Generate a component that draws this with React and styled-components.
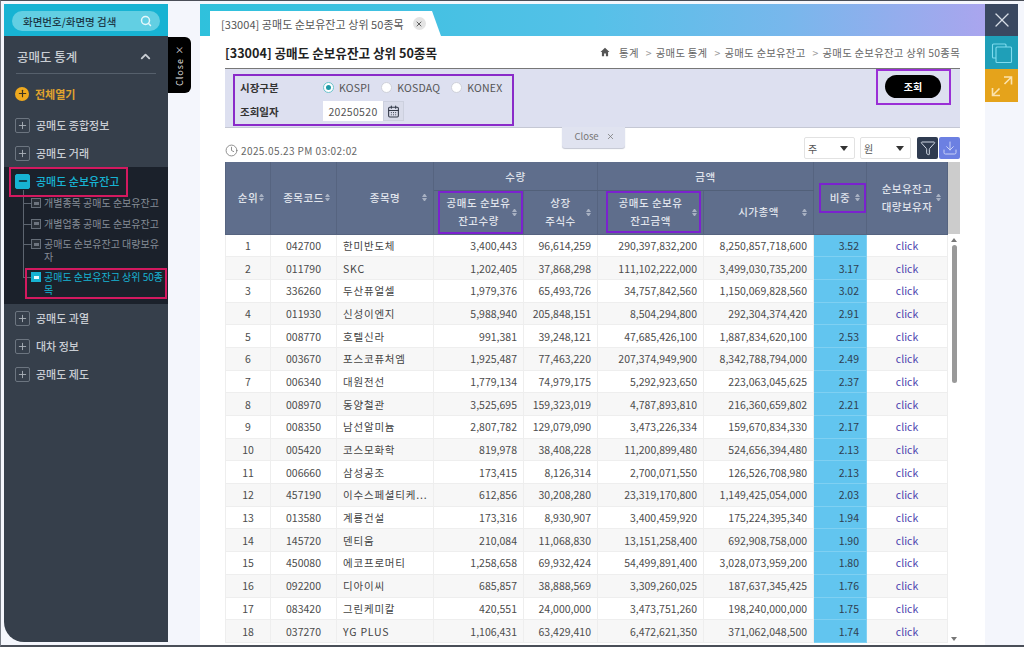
import React from "react";
import styled, { createGlobalStyle } from "styled-components";
import { Search, ChevronUp, Plus, Minus, X, Clock, CalendarDays, Funnel, Download } from "lucide-react";

const GlobalStyle = createGlobalStyle`
  html, body {
    margin: 0;
    height: 100%;
    overflow: hidden;
    background: #f4f6fc;
  }
  * { box-sizing: border-box; }
  body, table, button {
    font-family: "Noto Sans CJK KR", "Noto Sans", sans-serif;
  }
`;

const Frame = styled.div`
  width: 1024px;
  height: 647px;
  display: flex;
  padding: 3px 6px 0 3px;
  border-top: 1px solid #4a4f58;
  border-left: 1px solid #777c85;
  border-bottom: 2px solid #4a4f58;
  background: #f4f6fc;
`;

const Sidebar = styled.aside`
  position: relative;
  width: 164px;
  margin: 0 32px 3px 0;
  background: #363f4b;
  border-bottom-left-radius: 20px;
  flex-shrink: 0;
`;

const SearchBand = styled.div`
  height: 32px;
  background: #17b3d3;
  padding: 7px 8px 0 8px;
`;

const SearchPill = styled.div`
  height: 20px;
  border-radius: 10px;
  background: #62cfe3;
  display: flex;
  align-items: center;
  justify-content: space-between;
  padding: 0 8px 0 11px;
  font-size: 10.5px;
  font-weight: 500;
  color: #1d3a48;
  svg { color: #e6f8fb; }
`;

const SectionHead = styled.div`
  height: 38px;
  margin: 0 12px;
  padding: 3px 3px 0 1px;
  display: flex;
  align-items: center;
  justify-content: space-between;
  border-bottom: 1px solid #56606c;
  font-size: 12.5px;
  font-weight: 500;
  color: #c9cdd3;
`;

const OpenAll = styled.div`
  height: 37px;
  padding: 2px 0 0 11px;
  display: flex;
  align-items: center;
  gap: 6px;
  font-size: 11px;
  font-weight: 700;
  color: #e0a32e;
`;

const OpenDot = styled.span`
  width: 14px;
  height: 14px;
  border-radius: 50%;
  background: #efa91e;
  color: #3a3320;
  display: flex;
  align-items: center;
  justify-content: center;
`;

const MenuRow = styled.div`
  position: relative;
  height: 28px;
  padding-left: 11px;
  display: flex;
  align-items: center;
  gap: 6px;
  font-size: 11px;
  font-weight: 500;
  color: ${(p) => (p.$active ? "#17b3d3" : "#c9cdd3")};
`;

const PlusBox = styled.span`
  width: 15px;
  height: 15px;
  border-radius: 2px;
  display: flex;
  align-items: center;
  justify-content: center;
  border: 1px solid ${(p) => (p.$active ? "#17b3d3" : "#6c7580")};
  background: ${(p) => (p.$active ? "#17b3d3" : "transparent")};
  color: ${(p) => (p.$active ? "#10222c" : "#aab0b8")};
`;

const ActiveGroup = styled.div`
  height: 137px;
  background: #1b212b;
`;

const SubList = styled.div`
  position: relative;
  margin: -2px 0 0 0;
  &::before {
    content: "";
    position: absolute;
    left: 19px;
    top: -3px;
    height: 88px;
    width: 1px;
    background: #5d6570;
  }
`;

const SubRow = styled.div`
  position: relative;
  display: flex;
  gap: 3px;
  padding: 4px 0 4px 27px;
  font-size: 10px;
  line-height: 12.5px;
  color: ${(p) => (p.$active ? "#17b3d3" : "#868d97")};
  &::before {
    content: "";
    position: absolute;
    left: 19px;
    top: 10px;
    width: 8px;
    height: 1px;
    background: #5d6570;
  }
`;

const SubIcon = styled.span`
  flex-shrink: 0;
  width: 10px;
  height: 10px;
  margin-top: 1px;
  border: 1px solid ${(p) => (p.$active ? "#17b3d3" : "#666e78")};
  background: ${(p) => (p.$active ? "#17b3d3" : "#2a3038")};
  display: flex;
  align-items: center;
  justify-content: center;
  &::after {
    content: "";
    width: 5px;
    height: 3px;
    background: ${(p) => (p.$active ? "#e8fafd" : "#6d747e")};
  }
`;

const PinkBox = styled.div`
  position: absolute;
  left: ${(p) => p.$left}px;
  top: ${(p) => p.$top}px;
  width: ${(p) => p.$w}px;
  height: ${(p) => p.$h}px;
  border: 2px solid #d3195f;
  pointer-events: none;
`;

const CloseTab = styled.div`
  position: absolute;
  left: 164px;
  top: 33px;
  width: 23px;
  height: 56px;
  background: #000;
  border-radius: 0 6px 6px 0;
  color: #ddd;
  font-size: 9px;
  letter-spacing: 1px;
  display: flex;
  align-items: center;
  justify-content: center;
  span {
    writing-mode: vertical-rl;
    transform: rotate(180deg);
  }
`;

const Main = styled.main`
  width: 785px;
  flex-shrink: 0;
  background: #fff;
  display: flex;
  flex-direction: column;
  min-height: 0;
`;

const TabBand = styled.div`
  height: 32px;
  flex-shrink: 0;
  padding: 7px 0 0 10px;
  background: linear-gradient(90deg, #2fc1dc 0%, #55c1e8 50%, #78b7ec 75%, #aaa5ee 100%);
`;

const Tab = styled.div`
  width: 231px;
  height: 25px;
  background: #fff;
  clip-path: polygon(0 0, 222px 0, 100% 100%, 0 100%);
  padding: 0 0 0 11px;
  display: flex;
  align-items: center;
  gap: 9px;
  font-size: 11px;
  letter-spacing: 0.05px;
  color: #555;
`;

const TabClose = styled.span`
  width: 13px;
  height: 13px;
  border-radius: 50%;
  background: #e4e4e4;
  color: #444;
  display: flex;
  align-items: center;
  justify-content: center;
`;

const Content = styled.div`
  flex: 1;
  min-height: 0;
  padding: 0 25px;
  display: flex;
  flex-direction: column;
`;

const TitleRow = styled.div`
  height: 32px;
  flex-shrink: 0;
  display: flex;
  align-items: center;
  justify-content: space-between;
`;

const Title = styled.h1`
  margin: 0;
  font-size: 12.6px;
  font-weight: 700;
  color: #222;
`;

const Crumbs = styled.div`
  display: flex;
  align-items: center;
  font-size: 10.4px;
  letter-spacing: 0.25px;
  color: #666;
  svg { margin-right: 9px; }
  span + span::before {
    content: ">";
    margin: 0 4px 0 7px;
    color: #999;
  }
`;

const SearchPanel = styled.div`
  position: relative;
  height: 60px;
  flex-shrink: 0;
  display: flex;
  justify-content: space-between;
  padding: 5px 9px 0 8px;
  background: #dde0f0;
  border-top: 1px solid #777;
  border-bottom: 1px solid #c5c8d4;
`;

const Highlight = styled.div`
  width: 281px;
  height: 52px;
  border: 2px solid #8a2bc9;
  padding: 0 0 0 5px;
  display: flex;
  flex-direction: column;
  gap: 2px;
`;

const FilterRow = styled.div`
  display: flex;
  align-items: center;
  height: 22px;
  font-size: 10.5px;
  color: #555;
`;

const FilterLabel = styled.div`
  width: 83px;
  flex-shrink: 0;
  font-weight: 700;
  color: #333;
`;

const RadioItem = styled.label`
  display: flex;
  align-items: center;
  flex-shrink: 0;
  gap: 5px;
  margin-right: 11px;
  letter-spacing: 0.2px;
`;

const RadioDot = styled.span`
  width: 11px;
  height: 11px;
  border-radius: 50%;
  background: #fff;
  border: 1px solid ${(p) => (p.$on ? "#6bc4cc" : "#cfd1da")};
  display: flex;
  align-items: center;
  justify-content: center;
  &::after {
    content: "";
    width: 5px;
    height: 5px;
    border-radius: 50%;
    background: ${(p) => (p.$on ? "#1f9aa6" : "transparent")};
  }
`;

const DateInput = styled.div`
  width: 60px;
  height: 20px;
  background: #fff;
  display: flex;
  align-items: center;
  justify-content: center;
  font-size: 10.5px;
  letter-spacing: 0.3px;
  color: #555;
`;

const DateButton = styled.div`
  width: 21px;
  height: 20px;
  background: #d9dcea;
  border: 1px solid #ccd0de;
  color: #333a48;
  display: flex;
  align-items: center;
  justify-content: center;
`;

const QueryBox = styled.div`
  width: 75px;
  height: 36px;
  margin-top: -5px;
  border: 2px solid #9a2fd6;
  display: flex;
  align-items: center;
  justify-content: center;
`;

const QueryButton = styled.button`
  width: 56px;
  height: 23px;
  margin: -1px 1px 0 0;
  padding: 0;
  border: 0;
  border-radius: 12px;
  background: #000;
  color: #fff;
  font-size: 10px;
  font-weight: 700;
`;

const PanelClose = styled.div`
  position: absolute;
  top: 100%;
  left: 50%;
  width: 63px;
  height: 21px;
  margin-left: -31px;
  padding: 0 0 3px 3px;
  background: #e0e3f0;
  border-radius: 0 0 3px 3px;
  box-shadow: 0 1px 1px #c3c6d2;
  display: flex;
  align-items: center;
  justify-content: center;
  gap: 7px;
  font-size: 9.5px;
  color: #777;
`;

const ToolRow = styled.div`
  height: 34px;
  flex-shrink: 0;
  display: flex;
  align-items: flex-end;
  justify-content: space-between;
  padding-bottom: 3px;
`;

const Stamp = styled.div`
  display: flex;
  align-items: center;
  gap: 3px;
  margin-bottom: 1px;
  font-size: 10px;
  letter-spacing: 0.4px;
  color: #666;
  svg { color: #777; }
`;

const Tools = styled.div`
  display: flex;
  align-items: center;
`;

const SelectBox = styled.div`
  width: 51px;
  height: 22px;
  margin-right: 5px;
  padding: 0 6px 0 3px;
  background: #fff;
  border: 1px solid #e2e2e2;
  border-radius: 2px;
  display: flex;
  align-items: center;
  justify-content: space-between;
  font-size: 10px;
  color: #555;
  &::after {
    content: "";
    border-left: 4px solid transparent;
    border-right: 4px solid transparent;
    border-top: 5px solid #333;
  }
`;

const IconButton = styled.div`
  width: 21px;
  height: 22px;
  margin-left: ${(p) => p.$gap}px;
  border-radius: 2px;
  background: ${(p) => p.$bg};
  color: ${(p) => p.$fg};
  display: flex;
  align-items: center;
  justify-content: center;
`;

const TableWrap = styled.div`
  flex: 1;
  min-height: 0;
  overflow: hidden;
  display: flex;
`;

const Table = styled.table`
  width: 722px;
  flex-shrink: 0;
  table-layout: fixed;
  border-collapse: collapse;
  align-self: flex-start;
`;

const Th = styled.th`
  position: relative;
  height: ${(p) => p.$h || 44}px;
  padding: 0;
  background: #5f6e8c;
  border: 1px solid #566480;
  border-top: 0;
  font-size: 10.5px;
  font-weight: 500;
  line-height: 18px;
  letter-spacing: 0.5px;
  color: #e1e5ec;
  text-align: center;
`;

const GroupTh = styled(Th)`
  padding: 2px 0 0 0;
  border-bottom-color: #526079;
`;

const Sort = styled.span`
  position: absolute;
  right: 6px;
  top: 50%;
  margin-top: -5px;
  width: 5px;
  height: 10px;
  display: flex;
  flex-direction: column;
  justify-content: center;
  gap: 1px;
  &::before, &::after {
    content: "";
    border-left: 2.5px solid transparent;
    border-right: 2.5px solid transparent;
  }
  &::before { border-bottom: 3px solid #a8b1c2; }
  &::after { border-top: 3px solid #a8b1c2; }
`;

const PurpleBox = styled.span`
  position: absolute;
  left: ${(p) => p.$left}px;
  right: ${(p) => p.$right}px;
  top: ${(p) => p.$top}px;
  bottom: ${(p) => p.$bottom}px;
  border: 2px solid #7b22cf;
  pointer-events: none;
`;

const Tr = styled.tr`
  height: 22.7px;
  background: ${(p) => (p.$even ? "#f7f7f7" : "#fff")};
`;

const Td = styled.td`
  padding: ${(p) => (p.$align === "left" ? "1px 0 0 6px" : p.$align === "right" ? "1px 6px 0 0" : "1px 0 0 0")};
  border: 1px solid #eeeeee;
  font-size: 10.5px;
  line-height: 14px;
  color: #4c4c4c;
  text-align: ${(p) => p.$align || "center"};
  white-space: nowrap;
  overflow: hidden;
`;

const NameTd = styled(Td)`
  letter-spacing: 0.8px;
  color: #444;
`;

const RatioTd = styled(Td)`
  padding-right: 7px;
  background: #62c5ef;
  border-color: #7fd0f2;
  color: #2f4050;
`;

const ClickTd = styled(Td)`
  color: #4b3fae;
`;

const ScrollCol = styled.div`
  width: 13px;
  flex-shrink: 0;
  display: flex;
  flex-direction: column;
  align-items: center;
  border-right: 1px solid #eee;
`;

const ScrollHead = styled.div`
  width: 13px;
  height: 72px;
  flex-shrink: 0;
  background: #cccccc;
`;

const ScrollArrow = styled.span`
  flex-shrink: 0;
  margin-top: ${(p) => p.$mt}px;
  border-left: 3.5px solid transparent;
  border-right: 3.5px solid transparent;
  border-bottom: ${(p) => (p.$up ? "4px solid #777" : "0")};
  border-top: ${(p) => (p.$up ? "0" : "4px solid #777")};
`;

const ScrollThumb = styled.div`
  width: 5px;
  height: 138px;
  margin-top: 3px;
  border-radius: 3px;
  background: #999;
`;

const RightRail = styled.div`
  width: 33px;
  flex-shrink: 0;
  display: flex;
  flex-direction: column;
`;

const RailButton = styled.div`
  height: ${(p) => p.$h}px;
  background: ${(p) => p.$bg};
  color: ${(p) => p.$fg};
  display: flex;
  align-items: center;
  justify-content: center;
`;

const rows = [
  ["042700", "한미반도체", "3,400,443", "96,614,259", "290,397,832,200", "8,250,857,718,600", "3.52"],
  ["011790", "SKC", "1,202,405", "37,868,298", "111,102,222,000", "3,499,030,735,200", "3.17"],
  ["336260", "두산퓨얼셀", "1,979,376", "65,493,726", "34,757,842,560", "1,150,069,828,560", "3.02"],
  ["011930", "신성이엔지", "5,988,940", "205,848,151", "8,504,294,800", "292,304,374,420", "2.91"],
  ["008770", "호텔신라", "991,381", "39,248,121", "47,685,426,100", "1,887,834,620,100", "2.53"],
  ["003670", "포스코퓨처엠", "1,925,487", "77,463,220", "207,374,949,900", "8,342,788,794,000", "2.49"],
  ["006340", "대원전선", "1,779,134", "74,979,175", "5,292,923,650", "223,063,045,625", "2.37"],
  ["008970", "동양철관", "3,525,695", "159,323,019", "4,787,893,810", "216,360,659,802", "2.21"],
  ["008350", "남선알미늄", "2,807,782", "129,079,090", "3,473,226,334", "159,670,834,330", "2.17"],
  ["005420", "코스모화학", "819,978", "38,408,228", "11,200,899,480", "524,656,394,480", "2.13"],
  ["006660", "삼성공조", "173,415", "8,126,314", "2,700,071,550", "126,526,708,980", "2.13"],
  ["457190", "이수스페셜티케...", "612,856", "30,208,280", "23,319,170,800", "1,149,425,054,000", "2.03"],
  ["013580", "계룡건설", "173,316", "8,930,907", "3,400,459,920", "175,224,395,340", "1.94"],
  ["145720", "덴티움", "210,084", "11,068,830", "13,151,258,400", "692,908,758,000", "1.90"],
  ["450080", "에코프로머티", "1,258,658", "69,932,424", "54,499,891,400", "3,028,073,959,200", "1.80"],
  ["092200", "디아이씨", "685,857", "38,888,569", "3,309,260,025", "187,637,345,425", "1.76"],
  ["083420", "그린케미칼", "420,551", "24,000,000", "3,473,751,260", "198,240,000,000", "1.75"],
  ["037270", "YG PLUS", "1,106,431", "63,429,410", "6,472,621,350", "371,062,048,500", "1.74"],
];

const colWidths = [45, 66, 97, 90, 74, 106, 110, 53, 81];

const menuTop = ["공매도 종합정보", "공매도 거래"];
const menuBottom = ["공매도 과열", "대차 정보", "공매도 제도"];
const subMenu = ["개별종목 공매도 순보유잔고", "개별업종 공매도 순보유잔고", "공매도 순보유잔고 대량보유자"];

function MenuItem({ label }) {
  return (
    <MenuRow>
      <PlusBox><Plus size={11} strokeWidth={2} /></PlusBox>
      {label}
    </MenuRow>
  );
}

export default function App() {
  return (
    <>
      <GlobalStyle />
      <Frame>
        <Sidebar>
          <SearchBand>
            <SearchPill>
              화면번호/화면명 검색
              <Search size={12} strokeWidth={3} />
            </SearchPill>
          </SearchBand>
          <SectionHead>
            공매도 통계
            <ChevronUp size={15} strokeWidth={3} />
          </SectionHead>
          <OpenAll>
            <OpenDot><Plus size={11} strokeWidth={2.5} /></OpenDot>
            전체열기
          </OpenAll>
          {menuTop.map((m) => <MenuItem key={m} label={m} />)}
          <ActiveGroup>
            <MenuRow $active>
              <PlusBox $active><Minus size={12} strokeWidth={3} /></PlusBox>
              공매도 순보유잔고
            </MenuRow>
            <SubList>
              {subMenu.map((m) => (
                <SubRow key={m}><SubIcon />{m}</SubRow>
              ))}
              <SubRow $active><SubIcon $active />공매도 순보유잔고 상위 50종목</SubRow>
            </SubList>
          </ActiveGroup>
          {menuBottom.map((m) => <MenuItem key={m} label={m} />)}
          <PinkBox $left={5} $top={163} $w={119} $h={30} />
          <PinkBox $left={21} $top={264} $w={142} $h={31} />
          <CloseTab><span>Close ×</span></CloseTab>
        </Sidebar>

        <Main>
          <TabBand>
            <Tab>
              [33004] 공매도 순보유잔고 상위 50종목
              <TabClose><X size={8} strokeWidth={2.5} /></TabClose>
            </Tab>
          </TabBand>
          <Content>
            <TitleRow>
              <Title>[33004] 공매도 순보유잔고 상위 50종목</Title>
              <Crumbs>
                <svg width="10" height="10" viewBox="0 0 10 10"><path d="M5 .8 .5 5h1.4v4.2h2.2V6.4h1.8v2.8h2.2V5h1.4z" fill="#555" /></svg>
                <span>통계</span>
                <span>공매도 통계</span>
                <span>공매도 순보유잔고</span>
                <span>공매도 순보유잔고 상위 50종목</span>
              </Crumbs>
            </TitleRow>

            <SearchPanel>
              <Highlight>
                <FilterRow>
                  <FilterLabel>시장구분</FilterLabel>
                  <RadioItem><RadioDot $on />KOSPI</RadioItem>
                  <RadioItem><RadioDot />KOSDAQ</RadioItem>
                  <RadioItem><RadioDot />KONEX</RadioItem>
                </FilterRow>
                <FilterRow>
                  <FilterLabel>조회일자</FilterLabel>
                  <DateInput>20250520</DateInput>
                  <DateButton><CalendarDays size={13} strokeWidth={2} /></DateButton>
                </FilterRow>
              </Highlight>
              <QueryBox><QueryButton>조회</QueryButton></QueryBox>
              <PanelClose>Close <X size={9} /></PanelClose>
            </SearchPanel>

            <ToolRow>
              <Stamp>
                <Clock size={13} strokeWidth={1.5} />
                2025.05.23 PM 03:02:02
              </Stamp>
              <Tools>
                <SelectBox>주</SelectBox>
                <SelectBox>원</SelectBox>
                <IconButton $gap={1} $bg="#2f3b50" $fg="#cfd6e2"><Funnel size={16} strokeWidth={1.5} /></IconButton>
                <IconButton $gap={1} $bg="#6c80e2" $fg="#c9d2f7"><Download size={16} strokeWidth={1.5} /></IconButton>
              </Tools>
            </ToolRow>

            <TableWrap>
              <Table>
                <colgroup>
                  {colWidths.map((w, i) => <col key={i} width={w} />)}
                </colgroup>
                <thead>
                  <tr>
                    <Th rowSpan={2} $h={28}>순위<Sort /></Th>
                    <Th rowSpan={2} $h={28}>종목코드<Sort /></Th>
                    <Th rowSpan={2} $h={28}>종목명<Sort /></Th>
                    <GroupTh colSpan={2} $h={28}>수량</GroupTh>
                    <GroupTh colSpan={2} $h={28}>금액</GroupTh>
                    <Th rowSpan={2} $h={28}>비중<Sort /><PurpleBox $left={5} $right={0} $top={21} $bottom={21} /></Th>
                    <Th rowSpan={2} $h={28}>순보유잔고<br />대량보유자<Sort /></Th>
                  </tr>
                  <tr>
                    <Th>공매도 순보유<br />잔고수량<Sort /><PurpleBox $left={4} $right={0} $top={0} $bottom={0} /></Th>
                    <Th>상장<br />주식수<Sort /></Th>
                    <Th>공매도 순보유<br />잔고금액<Sort /><PurpleBox $left={8} $right={2} $top={0} $bottom={1} /></Th>
                    <Th>시가총액<Sort /></Th>
                  </tr>
                </thead>
                <tbody>
                  {rows.map((r, i) => (
                    <Tr key={r[0]} $even={i % 2 === 1}>
                      <Td>{i + 1}</Td>
                      <Td>{r[0]}</Td>
                      <NameTd $align="left">{r[1]}</NameTd>
                      <Td $align="right">{r[2]}</Td>
                      <Td $align="right">{r[3]}</Td>
                      <Td $align="right">{r[4]}</Td>
                      <Td $align="right">{r[5]}</Td>
                      <RatioTd $align="right">{r[6]}</RatioTd>
                      <ClickTd>click</ClickTd>
                    </Tr>
                  ))}
                </tbody>
              </Table>
              <ScrollCol>
                <ScrollHead />
                <ScrollArrow $up $mt={4} />
                <ScrollThumb />
                <ScrollArrow $mt={254} />
              </ScrollCol>
            </TableWrap>
          </Content>
        </Main>

        <RightRail>
          <RailButton $h={32} $bg="#3a4860" $fg="#d8dde6"><X size={24} strokeWidth={1.3} /></RailButton>
          <RailButton $h={33} $bg="#1f9fb8" $fg="#7fdcee">
            <svg width="22" height="22" viewBox="0 0 22 22" fill="none" stroke="currentColor" strokeWidth="1.1">
              <path d="M5 16H2.5a1 1 0 0 1-1-1V3a1 1 0 0 1 1-1H14a1 1 0 0 1 1 1v2" />
              <rect x="5" y="5" width="15.5" height="15.5" rx="1" />
            </svg>
          </RailButton>
          <RailButton $h={33} $bg="#e5a31b" $fg="#fbe3ae">
            <svg width="24" height="24" viewBox="0 0 24 24" fill="none" stroke="currentColor" strokeWidth="1.6">
              <path d="M14 3h7.5v7.5M21.5 3l-7 7" />
              <path d="M10 21.5H2.5V14M2.5 21.5l7-7" />
            </svg>
          </RailButton>
        </RightRail>
      </Frame>
    </>
  );
}
